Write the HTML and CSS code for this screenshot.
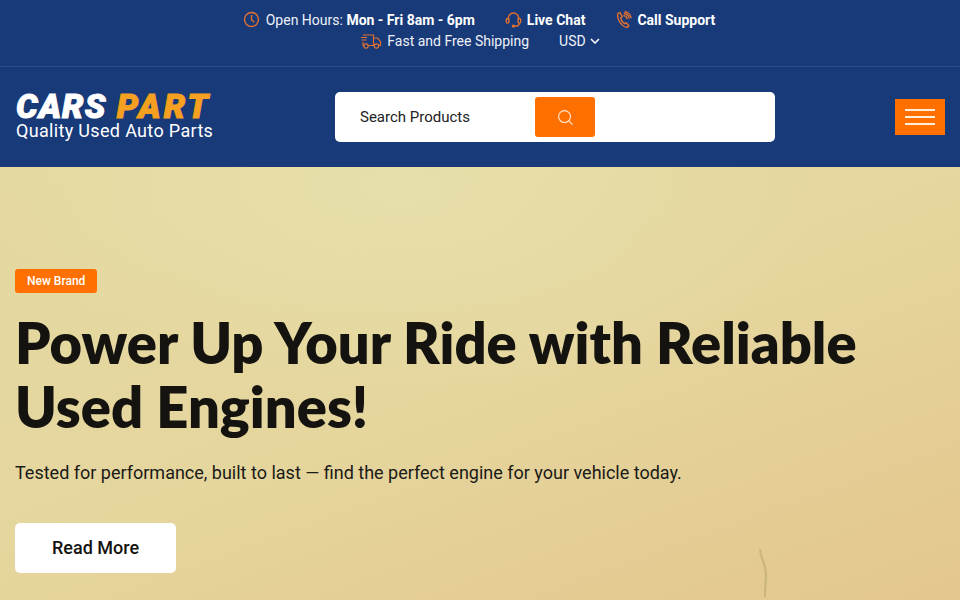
FILE: index.html
```html
<!DOCTYPE html>
<html lang="en">
<head>
    <meta charset="UTF-8">
    <meta name="viewport" content="width=device-width, initial-scale=1.0">
    <title>Cars Part</title>
    <link rel="stylesheet" href="styles.css">
</head>
<body>
    <div class="topbar">
        <div class="topbar-row topbar-row-first">
            <span class="top-item">
                <svg class="top-icon clock-icon" viewBox="0 0 18 18"><circle cx="9" cy="9" r="7.4"/><path d="M9 4.2V9.2L12 12"/></svg>
                <span>Open Hours: <b>Mon - Fri 8am - 6pm</b></span>
            </span>
            <span class="top-item">
                <svg class="top-icon" viewBox="0 0 18 18"><path d="M3.6 9.5V7.6a5.4 5.4 0 0 1 10.8 0v1.9"/><rect x="1.4" y="7.8" width="2.8" height="5" rx="1.3"/><rect x="13.8" y="7.8" width="2.8" height="5" rx="1.3"/><path d="M15 12.8c0 2-1.6 3.4-3.8 3.4H9.6"/><circle cx="8.8" cy="16" r="1"/></svg>
                <b>Live Chat</b>
            </span>
            <span class="top-item">
                <svg class="top-icon" viewBox="0 0 18 18"><path d="M3 2.6 5.3 1.8 7.6 6 6 7.4c.5 2 2 4.600 4 6l1.700-1 3 3.300-1.700 1.700C8 17.500 1.500 9.500 3 2.600Z"/><path d="M8.800 4.600c2 .2 3.600 1.800 4.200 4M9.400 2.600c3 .2 5.200 2.400 5.800 5.400M10 .8c3.600.2 6.600 3 7.200 6.800"/></svg>
                <b>Call Support</b>
            </span>
        </div>
        <div class="topbar-row">
            <span class="top-item">
                <svg class="truck-icon" viewBox="0 0 22 16"><path d="M3 2h10.500v10.500H8.600M3.500 12.500H3V9M13.500 5h4l3 3.600v3.900h-1.500M13.500 12.500h1M1 4.500h6M1.500 7h5"/><circle cx="6" cy="13" r="2.200"/><circle cx="16.500" cy="13" r="2.200"/></svg>
                <span>Fast and Free Shipping</span>
            </span>
            <span class="currency">
                USD
                <svg class="chevron" viewBox="0 0 10 6"><path d="M1 1l4 4 4-4"/></svg>
            </span>
        </div>
    </div>

    <header class="main-header">
        <a class="logo" href="#">
            <span class="logo-name">CARS <em>PART</em></span>
            <span class="logo-tag">Quality Used Auto Parts</span>
        </a>
        <form class="search">
            <span class="search-label">Search Products</span>
            <button class="search-btn" type="button">
                <svg viewBox="0 0 18 18"><circle cx="8" cy="8" r="6.300"/><path d="M12.600 12.600 16.500 16.500"/></svg>
            </button>
        </form>
        <button class="menu-btn" type="button"><span></span><span></span><span></span></button>
    </header>

    <main class="hero">
        <span class="badge">New Brand</span>
        <h1>Power Up Your Ride with Reliable Used Engines!</h1>
        <p>Tested for performance, built to last — find the perfect engine for your vehicle today.</p>
        <a class="read-more" href="#">Read More</a>
        <svg class="hero-mark" viewBox="0 0 20 54"><path d="M5 2c0 5 2 9 3 12s3 8 3 14-1 10-1 22"/></svg>
    </main>
</body>
</html>
```

FILE: styles.css
```css
* {
    box-sizing: border-box;
}
html, body {
    height: 100%;
}
body {
    margin: 0;
    font-family: 'Roboto', sans-serif;
    background-color: #e5d7a0;
    display: flex;
    flex-direction: column;
    overflow: hidden;
}
.topbar {
    height: 67px;
    background-color: #183a79;
    border-bottom: 1px solid #2a4c8a;
    color: #eef1f7;
    font-size: 14px;
    padding-top: 9px;
}
.topbar-row {
    display: flex;
    justify-content: center;
    gap: 30px;
    height: 21px;
    align-items: center;
}
.topbar-row-first {
    padding-right: 2px;
}
.top-item {
    display: flex;
    align-items: center;
}
.top-item b {
    font-weight: 700;
    color: #fff;
}
.top-icon {
    width: 17px;
    height: 17px;
    margin-right: 5px;
    fill: none;
    stroke: #e0712f;
    stroke-width: 1.5;
}
.clock-icon {
    margin-right: 6px;
}
.truck-icon {
    width: 22px;
    height: 16px;
    margin-right: 5px;
    fill: none;
    stroke: #e0712f;
    stroke-width: 1.2;
}
.currency {
    display: flex;
    align-items: center;
    gap: 4px;
}
.chevron {
    width: 10px;
    height: 6px;
    fill: none;
    stroke: #fff;
    stroke-width: 1.5;
}
.main-header {
    height: 100px;
    background-color: #183a79;
    display: flex;
    align-items: center;
    justify-content: space-between;
    padding: 0 15px;
}
.logo {
    display: flex;
    flex-direction: column;
    width: 200px;
    padding: 0 0 3px 1px;
    text-decoration: none;
    color: #fff;
}
.logo-name {
    font-family: 'Roboto', sans-serif;
    font-size: 34px;
    font-weight: 900;
    font-style: italic;
    line-height: 30px;
    letter-spacing: 1px;
    white-space: pre;
    -webkit-text-stroke: 1px currentColor;
}
.logo-name em {
    color: #f5a020;
    letter-spacing: 3px;
    margin-left: 1px;
}
.logo-tag {
    font-size: 18px;
    line-height: 19px;
    letter-spacing: .33px;
    white-space: nowrap;
}
.search {
    width: 440px;
    height: 50px;
    background-color: #fff;
    border-radius: 5px;
    display: flex;
    align-items: center;
    padding-left: 25px;
}
.search-label {
    width: 175px;
    font-size: 15px;
    color: #222;
}
.search-btn {
    width: 60px;
    height: 40px;
    border: none;
    border-radius: 3px;
    background-color: #ff7000;
    display: flex;
    align-items: center;
    justify-content: center;
}
.search-btn svg {
    width: 17px;
    height: 17px;
    fill: none;
    stroke: #ffe8cf;
    stroke-width: 1.2;
}
.menu-btn {
    width: 50px;
    height: 36px;
    border: none;
    background-color: #ff7000;
    display: flex;
    flex-direction: column;
    align-items: center;
    justify-content: center;
    gap: 5px;
    padding: 0;
}
.menu-btn span {
    width: 30px;
    height: 2px;
    background-color: #ffeeda;
}
.hero {
    flex: 1;
    position: relative;
    padding: 102px 15px 0;
    background:
        radial-gradient(ellipse 420px 200px at 400px 20px, rgba(232, 226, 175, .7), rgba(232, 226, 175, 0)),
        linear-gradient(160deg, #e4d9a0 0%, #e5d69e 50%, #e3c68d 100%);
}
.badge {
    display: inline-block;
    height: 24px;
    line-height: 24px;
    padding: 0 12px;
    background-color: #ff7000;
    color: #fff;
    font-size: 12px;
    font-weight: 500;
    border-radius: 3px;
}
.hero h1 {
    margin: 18px 0 0;
    font-family: 'Lato', sans-serif;
    font-size: 56px;
    font-weight: 800;
    line-height: 64px;
    word-spacing: .2px;
    color: #14130f;
    max-width: 900px;
}
.hero p {
    margin: 21px 0 0;
    font-size: 18px;
    line-height: 26px;
    color: #1a1a16;
}
.read-more {
    display: inline-block;
    margin-top: 37px;
    width: 161px;
    height: 50px;
    line-height: 50px;
    text-align: center;
    background-color: #fff;
    border-radius: 5px;
    color: #14130f;
    font-size: 18px;
    font-weight: 500;
    text-decoration: none;
}
.hero-mark {
    position: absolute;
    left: 755px;
    top: 380px;
    width: 20px;
    height: 54px;
    fill: none;
    stroke: #bfae72;
    stroke-width: 2;
    opacity: .75;
}
```
